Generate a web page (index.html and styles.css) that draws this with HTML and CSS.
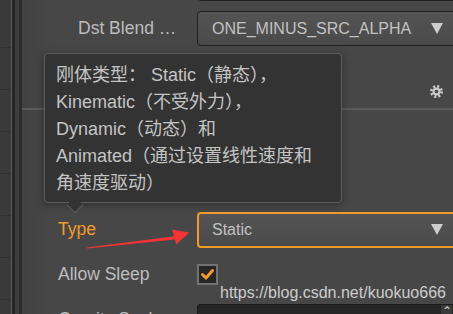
FILE: index.html
```html
<!DOCTYPE html>
<html lang="zh-CN">
<head>
    <meta charset="UTF-8">
    <meta name="viewport" content="width=device-width, initial-scale=1.0">
    <title>RigidBody Type</title>
    <link rel="stylesheet" href="styles.css">
</head>
<body>
    <div class="app">
        <div class="side">
            <div class="side-list"></div>
            <div class="side-edge"></div>
        </div>

        <div class="panel">
            <div class="row row-cut">
                <span class="label"></span>
                <div class="select"><span class="caret"></span></div>
            </div>
            <div class="row row-nested">
                <span class="label">Dst Blend Factor</span>
                <div class="select"><span>ONE_MINUS_SRC_ALPHA</span><span class="caret"></span></div>
            </div>

            <div class="comp-header">
                <svg class="gear" width="13" height="13" viewBox="-6.5 -6.5 13 13">
                    <circle r="4" fill="#c9c9c9"/>
                    <circle r="5" fill="none" stroke="#c9c9c9" stroke-width="3" stroke-dasharray="2 1.93"/>
                    <circle r="1.8" fill="#474747"/>
                </svg>
            </div>

            <div class="comp-body">
                <div class="row">
                    <span class="label"></span>
                    <div class="checkbox"></div>
                </div>
                <div class="row">
                    <span class="label"></span>
                    <div class="checkbox"></div>
                </div>
                <div class="row">
                    <span class="label label-active">Type</span>
                    <div class="select select-active"><span>Static</span><span class="caret"></span></div>
                </div>
                <div class="row">
                    <span class="label">Allow Sleep</span>
                    <div class="checkbox">
                        <svg width="17" height="17" viewBox="0 0 17 17">
                            <polyline points="3.5,8.5 7,12 13.5,4.5" fill="none" stroke="#f39a2c" stroke-width="3" stroke-linecap="round" stroke-linejoin="round"/>
                        </svg>
                    </div>
                </div>
                <div class="row row-input">
                    <span class="label">Gravity Scale</span>
                    <div class="num-input">
                        <span class="spinner">&#8963;</span>
                    </div>
                </div>
            </div>
        </div>

        <div class="tooltip">
            刚体类型： Static（静态），<br>
            Kinematic（不受外力），<br>
            Dynamic（动态）和<br>
            Animated（通过设置线性速度和<br>
            角速度驱动）
        </div>

        <svg class="red-arrow" width="453" height="314" viewBox="0 0 453 314">
            <polygon points="87,247.6 174,236.2 172,229.5 189.5,232.5 176,244.5 175,239.4 87,248.6" fill="#f23434"/>
        </svg>

        <div class="watermark">https://blog.csdn.net/kuokuo666</div>
    </div>
</body>
</html>
```

FILE: styles.css
```css
body {
    margin: 0;
    padding: 0;
    background-color: #474747;
    font-family: "Liberation Sans", "Noto Sans CJK SC", sans-serif;
    overflow: hidden;
}

.app {
    position: relative;
    display: flex;
    width: 453px;
    height: 314px;
    overflow: hidden;
}

/* left dock strip */
.side {
    display: flex;
    flex: none;
    width: 22px;
}

.side-list {
    width: 11px;
    background-color: #3a3a3a;
    background-image: repeating-linear-gradient(to bottom, transparent 0, transparent 41px, #303030 41px, #303030 42px);
    background-position: 0 6px;
}

.side-edge {
    width: 11px;
    background: linear-gradient(to right, #5e5e5e 0, #5e5e5e 1px, #262626 1px, #262626 4px, #3e3e3e 4px, #3e3e3e 8px, #2c2c2c 8px);
}

.panel {
    flex: 1;
    min-width: 0;
    padding-left: 36px;
    background: linear-gradient(to right, #414141 0, #474747 30px);
}

.row {
    display: flex;
    align-items: center;
    height: 45px;
}

.row-cut {
    margin-top: -39px;
}

.row-nested {
    padding-left: 20px;
}

.label {
    flex: none;
    width: 139px;
    color: #bdbdbd;
    font-size: 17.5px;
    white-space: nowrap;
    overflow: hidden;
}

.row-nested .label {
    width: 101px;
    margin-right: 18px;
    text-overflow: ellipsis;
}

.label-active {
    color: #f39a2c;
}

.select {
    display: flex;
    align-items: center;
    flex: none;
    width: 270px;
    height: 35px;
    box-sizing: border-box;
    padding-left: 14px;
    border: 1px solid #202020;
    border-radius: 4px;
    background: linear-gradient(#545454, #4a4a4a);
    color: #c2c2c2;
    font-size: 16px;
}

.select-active {
    height: 36px;
    padding-left: 13px;
    border: 2px solid #f39a2c;
}

.caret {
    margin-left: auto;
    margin-right: 23px;
    width: 0;
    height: 0;
    border-left: 6.5px solid transparent;
    border-right: 6.5px solid transparent;
    border-top: 11px solid #cdcdcd;
}

.select-active .caret {
    margin-right: 22px;
}

.comp-header {
    display: flex;
    align-items: center;
    height: 36px;
    margin-top: 21px;
    margin-left: -36px;
    border-bottom: 2px solid #5b5b5b;
}

.gear {
    margin-left: auto;
    margin-right: 10px;
    margin-top: 2px;
}

.comp-body {
    padding-top: 7px;
}

.checkbox {
    display: flex;
    align-items: center;
    justify-content: center;
    flex: none;
    width: 21px;
    height: 21px;
    box-sizing: border-box;
    border: 2px solid #727272;
    background: #262626;
}

.num-input {
    display: flex;
    flex: none;
    width: 270px;
    height: 31px;
    box-sizing: border-box;
    border: 1px solid #1b1b1b;
    border-radius: 3px;
    background: #262626;
}

.spinner {
    margin-left: auto;
    margin-right: 14px;
    width: 11px;
    background: #3a3a3a;
    color: #cfcfcf;
    font-size: 12px;
    text-align: center;
    line-height: 12px;
}

/* tooltip over the inspector */
.tooltip {
    position: absolute;
    left: 44px;
    top: 53px;
    width: 298px;
    height: 150px;
    box-sizing: border-box;
    padding: 8px 11px;
    border: 1px solid #5e5e5e;
    border-radius: 4px;
    background: #333333;
    box-shadow: 0 2px 8px rgba(0,0,0,0.35);
    color: #c4c4c4;
    font-size: 18px;
    line-height: 27px;
    white-space: nowrap;
}

.tooltip::after {
    content: "";
    position: absolute;
    left: 24px;
    bottom: -9px;
    width: 11px;
    height: 11px;
    background: #333333;
    border-right: 1px solid #5e5e5e;
    border-bottom: 1px solid #5e5e5e;
    transform: rotate(45deg);
}

.red-arrow {
    position: absolute;
    left: 0;
    top: 0;
    pointer-events: none;
}

.watermark {
    position: absolute;
    left: 220px;
    top: 284px;
    color: #cccccc;
    font-size: 16px;
    line-height: 18px;
    white-space: nowrap;
}
```
